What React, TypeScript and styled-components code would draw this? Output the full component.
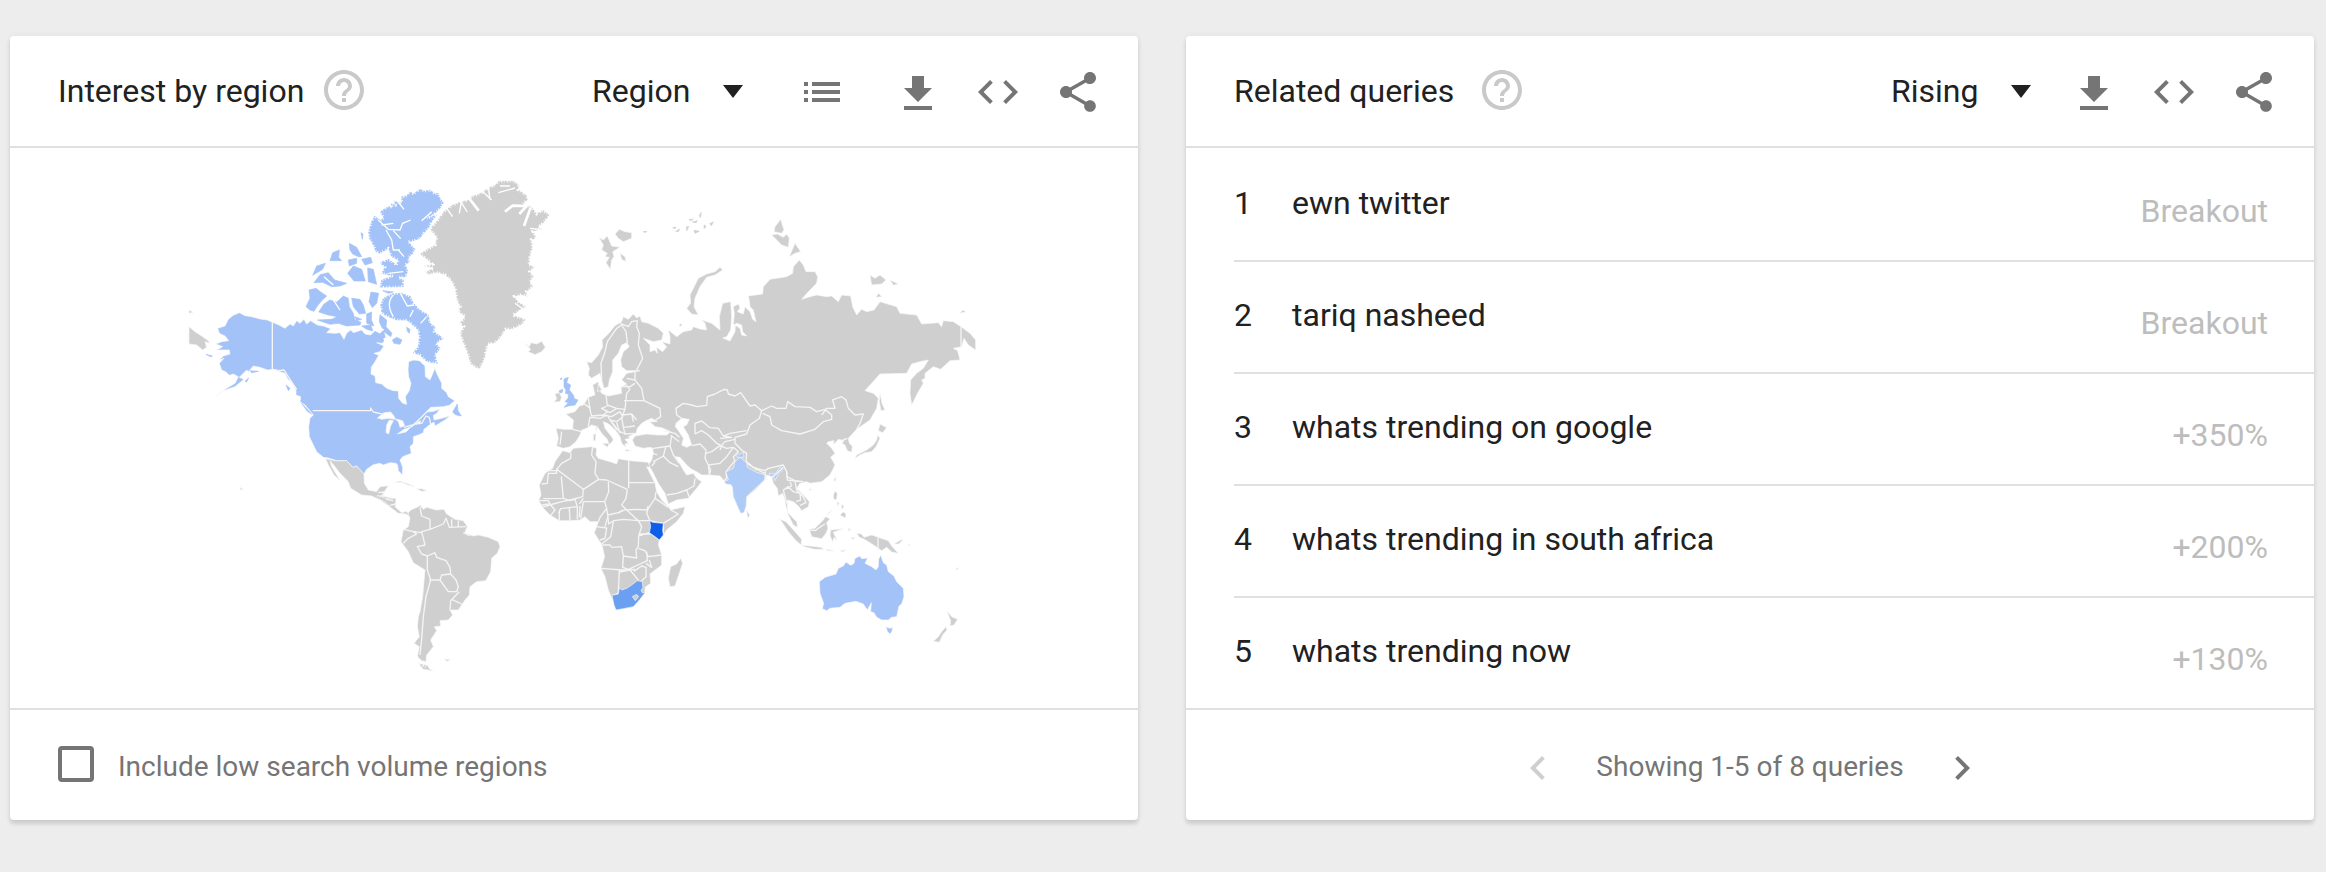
import React from "react";
import styled, { createGlobalStyle } from "styled-components";

const GlobalStyle = createGlobalStyle`
  *, *::before, *::after { box-sizing: border-box; }
  body {
    margin: 0;
    background: #ededed;
    color: #212121;
    font-family: Roboto, "Liberation Sans", sans-serif;
    font-size: 32px;
  }
`;

const Page = styled.main`
  display: grid;
  grid-template-columns: repeat(auto-fit, minmax(min(100%, 900px), 1fr));
  gap: 48px;
  padding: 36px 12px 52px 10px;
`;

const Card = styled.section`
  display: flex;
  flex-direction: column;
  min-width: 0;
  background: #fff;
  border-radius: 4px;
  box-shadow: 0 4px 4px rgba(0, 0, 0, 0.12), 0 0 6px rgba(0, 0, 0, 0.06);
`;

const CardHeader = styled.header`
  display: flex;
  align-items: center;
  min-height: 112px;
  padding: 0 36px 0 48px;
  border-bottom: 2px solid #e0e0e0;
`;

const Title = styled.h2`
  margin: 0;
  font-size: 32px;
  font-weight: 400;
  line-height: 40px;
`;

const IconButton = styled.button<{ $tone?: string }>`
  display: block;
  flex: none;
  width: 48px;
  height: 48px;
  padding: 0;
  border: 0;
  background: none;
  color: ${(p) => p.$tone ?? "#757575"};
  cursor: pointer;

  svg {
    display: block;
    width: 48px;
    height: 48px;
    fill: currentColor;
  }
`;

const HelpButton = styled(IconButton)<{ $gap: number }>`
  margin-left: ${(p) => p.$gap}px;
`;

const ListButton = styled(IconButton)`
  margin-right: 16px;
`;

const Toolbar = styled.div`
  display: flex;
  align-items: center;
  gap: 32px;
  margin-left: auto;
`;

const SelectBox = styled.span<{ $gap: number }>`
  position: relative;
  display: inline-flex;
  align-items: center;
  margin-right: ${(p) => p.$gap}px;

  svg {
    position: absolute;
    right: 0;
    width: 20px;
    height: 13px;
    fill: #212121;
    pointer-events: none;
  }
`;

const Select = styled.select`
  appearance: none;
  margin: 0;
  padding: 0 52px 0 0;
  border: 0;
  background: none;
  color: #212121;
  font: inherit;
  line-height: 40px;
`;

const CardFooter = styled.footer<{ $center?: boolean }>`
  display: flex;
  align-items: flex-start;
  justify-content: ${(p) => (p.$center ? "center" : "flex-start")};
  gap: 34px;
  min-height: 112px;
  padding: 34px 48px 28px;
  border-top: 2px solid #e0e0e0;
  color: #757575;
  font-size: 28px;
  line-height: 46px;
`;

const CheckLabel = styled.label`
  display: flex;
  align-items: flex-start;
  gap: 24px;
`;

const Checkbox = styled.input`
  appearance: none;
  width: 36px;
  height: 36px;
  margin: 2px 0 0;
  border: 4px solid #757575;
  border-radius: 4px;

  &:checked {
    background: #757575;
  }
`;

const QueryList = styled.ol`
  flex: 1;
  margin: 0;
  padding: 0 0 0 48px;
  list-style: none;
`;

const QueryRow = styled.li`
  display: grid;
  grid-template-columns: 58px 1fr auto;
  align-items: start;
  height: 112px;
  padding: 33px 46px 0 0;
  border-top: 2px solid #e0e0e0;
  line-height: 40px;

  &:first-child {
    border-top-color: transparent;
  }
`;

const QueryLink = styled.a`
  color: inherit;
  text-decoration: none;
`;

const QueryValue = styled.span`
  color: #bdbdbd;
  line-height: 56px;
`;

const MapArea = styled.div`
  flex: 1;
`;

const MapSvg = styled.svg`
  display: block;
  width: 100%;
  height: 560px;
`;

const Land = styled.path<{ $fill?: string; $edge?: string }>`
  fill: ${(p) => p.$fill ?? "#cfcfcf"};
  stroke: ${(p) => p.$edge ?? "#f8f8f8"};
  stroke-width: 2;
  stroke-linejoin: round;
`;

const Border = styled.path`
  fill: none;
  stroke: #f5f5f5;
  stroke-width: 4;
  stroke-linejoin: round;
`;

const Fjord = styled.path<{ $width?: number }>`
  fill: none;
  stroke: #fff;
  stroke-width: ${(p) => p.$width ?? 4};
`;

const Coast = styled.path<{ $width?: number }>`
  fill: none;
  stroke: #fff;
  stroke-width: ${(p) => p.$width ?? 11};
  stroke-dasharray: 3 5 2 8;
`;

const Water = styled.path`
  fill: #fff;
  stroke: #f5f5f5;
  stroke-width: 2;
`;

const BLUE = "#a3c2f7";
const INDIA = "#aecaf7";
const KENYA = "#0f5ee8";
const SOUTH_AFRICA = "#6a9ff2";

const ELLESMERE =
  "M600 125L612 118 625 110 638 112 632 100 650 108 640 93 665 100 665 80 680 78 690 65 700 72 720 58 735 64 750 60 765 72 775 70 778 82 790 98 780 115 765 130 740 145 770 135 755 155 745 175 730 190 720 205 700 212 685 215 705 238 695 255 685 262 688 275 675 285 683 300 678 320 655 322 670 330 670 350 600 352 605 330 640 318 605 310 615 292 600 278 625 268 650 285 655 270 635 260 625 235 600 250 588 245 580 225 568 205 566 185 573 160 583 138 600 150 612 145Z";
const BAFFIN =
  "M610 385L635 372 665 370 692 380 700 400 720 420 745 435 750 460 765 470 762 485 790 505 768 520 780 535 765 555 772 580 740 575 720 555 700 548 715 530 718 500 715 480 695 462 680 450 650 450 625 440 606 430 602 405Z";
const GREENLAND =
  "M118 282L140 268 165 255 170 232 155 215 150 205 165 190 190 155 215 135 240 125 262 120 275 108 300 100 315 90 330 80 345 75 355 62 400 62 418 75 415 88 440 105 445 118 430 132 455 140 470 160 490 150 510 165 490 190 475 200 485 208 460 215 470 235 455 240 458 265 450 290 448 315 465 320 450 335 462 350 450 365 460 380 440 395 442 410 425 405 405 410 415 425 440 440 425 450 400 465 438 478 430 490 415 500 395 508 378 508 360 535 345 550 325 552 318 575 315 595 308 610 300 628 285 622 270 610 262 580 248 545 240 520 250 500 238 490 255 470 235 455 240 440 230 420 225 385 212 360 195 345 170 338 145 345 135 335 160 325 130 318 155 312 140 298Z";

function WorldMap() {
  return (
    <MapSvg viewBox="10 148 1128 560" role="img" aria-label="World map of search interest by region">
      <g transform="translate(180 170) scale(.33333)">
        <Land
          $fill={BLUE}
          d="M178 428L195 437 215 440 240 447 262 450 277 457 297 465 315 475 330 462 340 468 350 452 360 460 372 448 380 462 392 452 412 465 430 468 452 476 440 488 465 490 480 488 492 508 500 490 512 480 520 488 545 480 555 492 572 495 585 482 600 490 612 478 618 505 608 520 590 518 612 528 600 545 582 550 596 556 585 575 574 592 573 612 585 618 587 638 605 642 620 655 640 662 655 663 656 685 668 700 680 703 676 680 688 662 693 640 686 620 684 600 686 575 700 570 718 572 735 588 736 620 750 630 765 595 770 610 785 640 785 655 800 668 805 680 824 692 808 706 790 710 755 712 740 726 760 724 780 718 768 732 760 736 762 750 785 745 810 738 795 750 765 768 762 756 748 765 732 778 730 788 715 795 700 800 700 820 690 830 694 850 668 860 660 870 668 892 667 915 655 902 653 885 648 880 630 878 610 885 600 880 580 884 560 898 552 912 545 905 530 888 518 892 500 872 470 872 445 864 430 862 410 845 400 825 388 800 386 770 390 745 400 735 392 725 375 705 360 695 362 680 348 675 348 660 335 635 325 630 315 610 300 605 280 598 262 600 240 592 220 588 205 605 200 600 178 622 192 628 165 650 130 662 107 678 140 655 165 640 175 620 160 612 148 616 138 606 125 600 118 580 132 565 118 570 130 558 150 552 148 540 110 540 128 530 108 522 125 515 146 512 135 498 118 490 113 475 135 468 145 448 160 436Z"
        />
        <Land
          $fill={BLUE}
          $edge={BLUE}
          d="M387 360L408 355 425 368 440 378 425 392 412 408 402 424 390 420 378 410 390 385ZM432 402L450 390 470 397 490 378 505 385 508 410 520 430 525 450 543 457 540 465 500 468 475 460 450 463 412 450 455 448 472 440 445 435 416 426ZM515 385L540 388 550 405 557 430 538 432 520 410ZM573 366L596 370 590 400 577 413 567 395ZM560 432L575 426 574 450 582 468 560 460ZM545 468L573 465 578 483 560 478ZM402 338L420 314 445 308 464 330 500 340 480 348 455 350 428 337ZM398 316L410 288 436 280 428 298ZM450 272L458 248 478 240 476 262 485 272ZM508 220L530 232 545 260 535 260 518 252 510 240ZM543 188L549 192 547 208ZM503 310L520 288 545 298 556 333 522 333ZM563 294L580 298 590 343 565 335ZM505 270L530 265 530 280 508 288ZM545 268L572 262 577 278 555 285ZM600 434L620 450 618 470 636 490 632 500 612 485 598 455ZM637 510L650 502 666 510 660 523 642 520ZM818 726L832 702 834 722 844 738 826 734ZM608 362L640 366 625 370ZM680 472L690 478 688 490 682 484ZM525 440L545 448 530 452Z"
        />
        <Land $fill={BLUE} $edge={BLUE} d="M78 553L97 558 92 560ZM195 634L206 624 200 636ZM210 602L235 604 215 608ZM318 645L330 655 325 662ZM365 700L395 732 382 724Z" />
        <Land $fill={BLUE} $edge={BLUE} d={ELLESMERE} />
        <Coast $width={8} d={ELLESMERE} />
        <Land $fill={BLUE} $edge={BLUE} d={BAFFIN} />
        <Coast $width={8} d={BAFFIN} />
        <Fjord d="M595 150L625 178 660 180 668 160 692 150M640 182L662 206M618 180L635 210 640 240 660 240M650 90L672 118M755 125L725 152M605 165L640 160M655 240L672 260M625 310L670 305M605 355H670" />
        <Fjord d="M640 375Q616 400 640 440M662 372L682 408 702 405M700 420L690 440M740 440L722 460M460 390L480 420M432 320L460 345M590 470L612 480" />
        <Fjord $width={7} d="M690 555L765 590M612 505L640 540" />
        <Water d="M592 744L612 728 632 726 642 738 645 748 625 745 606 748ZM628 750L640 752 632 768 626 792 618 788 620 764ZM645 746L668 752 674 768 660 772 655 755ZM652 792L672 778 694 770 678 786ZM702 762L722 752 720 760Z" />
        <Border d="M398 722H572V714L580 726 612 733M672 772L700 764 722 744 755 711M692 772L706 762 725 760 738 738 748 742 752 762M277 457V598L298 602 312 600 330 628 350 658" />
        <Land d="M437 866L470 873 500 872 518 892 530 888 552 912 553 940 565 960 590 965 600 950 625 947 615 962 605 978 640 985 648 990 645 1016 630 1010 600 990 575 978 545 975 512 955 505 935 480 910 465 890 450 872 455 890 470 915 480 932 462 915 445 885Z" />
        <Land d="M27 470L45 485 65 498 85 512 90 520 75 515 80 532 68 540 50 525 27 522ZM27 420L40 427 27 430Z" />
        <Land $fill={BLUE} d="M180 952L187 956 183 961Z" />
      </g>

      <g transform="translate(380 160) scale(.33333)">
        <Land d={GREENLAND} />
        <Coast d={GREENLAND} />
        <Fjord d="M195 138L218 170M245 120L238 160M242 125L262 156M300 88L335 120M325 82L330 118M355 98L405 84M360 78L390 78M450 205L480 208M405 430L440 455M400 470L425 448" />
        <Fjord $width={8} d="M262 108L296 152M375 155L398 137 440 138 418 162M452 142L432 198" />
        <Land d="M433 548L448 560 452 548 470 552 485 544 496 562 485 575 465 584 445 575 452 568Z" />
        <Land $fill={BLUE} $edge={BLUE} d="M552 657L565 652 560 668 572 675 568 690 580 705 583 716 594 720 585 735 565 738 552 742 565 728 555 725 564 715 566 703 556 700 558 690 552 680ZM538 692L549 688 546 698 538 698ZM541 656L546 653 543 660Z" />
        <Land d="M525 701L538 698 545 712 540 725 522 726 530 716Z" />
      </g>

      <g transform="translate(520 160) scale(.33333)">
        <Land d="M200 605L215 608 235 585 248 560 246 540 262 525 285 497 305 485 310 470 325 478 340 462 350 474 360 468 365 485 385 490 415 505 430 520 425 540 400 545 370 535 390 555 390 575 405 570 412 580 410 562 428 575 440 560 425 545 450 552 450 530 445 510 460 522 470 530 490 515 515 510 520 500 540 507 560 510 555 490 545 480 575 490 600 510 598 470 608 430 632 425 635 470 632 510 620 530 608 534 630 543 645 515 646 496 660 505 665 525 680 528 668 515 665 495 650 490 640 495 643 460 640 440 655 432 660 444 652 455 670 462 675 440 690 455 698 478 708 485 700 450 690 440 688 422 685 408 728 402 730 380 750 358 800 350 818 340 820 320 838 300 850 315 858 335 885 335 893 350 890 370 865 395 845 418 870 410 890 405 920 410 935 408 955 425 965 405 992 408 998 440 1010 465 1025 448 1040 455 1062 450 1080 425 1130 440 1140 460 1190 465 1205 492 1255 488 1265 500 1270 482 1300 485 1323 500 1350 520 1367 540 1367 570 1345 555 1332 535 1325 560 1300 565 1313 572 1320 600 1290 602 1262 628 1240 620 1215 640 1215 655 1205 660 1210 670 1195 695 1175 735 1170 700 1172 660 1190 640 1210 625 1225 600 1200 605 1175 612 1160 640 1080 642 1035 692 1060 700 1075 715 1070 745 1050 780 1010 808 985 835 988 850 997 858 995 877 982 872 975 855 966 850 972 842 955 838 940 855 942 842 925 845 920 850 935 865 945 880 932 892 940 905 945 915 930 945 905 965 870 970 860 965 840 970 830 985 855 1010 868 1025 865 1040 845 1052 835 1038 820 1025 802 1020 802 1055 815 1070 830 1085 833 1102 820 1095 805 1065 798 1040 795 1020 788 1000 775 1008 772 985 760 970 755 950 740 945 735 960 725 970 705 990 680 1010 678 1040 665 1060 655 1045 640 1010 637 980 632 970 620 972 610 960 600 948 570 945 545 945 530 935 515 928 500 915 480 892 466 890 480 912 490 930 500 945 520 940 530 955 545 965 530 985 505 1015 470 1020 445 1032 435 1000 415 970 395 930 385 915 395 900 400 880 398 865 390 862 370 865 345 858 337 840 345 828 380 822 410 825 440 825 452 815 425 803 405 800 390 785 412 785 395 775 378 782 365 790 352 805 348 820 335 825 325 830 330 835 315 838 325 850 315 852 318 862 305 850 300 830 290 815 270 795 262 790 250 785 255 805 275 830 280 840 268 855 262 838 245 820 232 800 215 795 200 805 185 810 180 825 168 845 150 860 130 865 110 858 115 835 108 805 130 808 158 808 160 780 138 762 165 755 178 738 190 735 205 712 225 705 218 675 235 665 240 690 245 700 265 708 305 700 303 682 320 672 305 660 320 640 345 635 360 632 320 632 305 620 302 600 310 575 328 560 320 548 305 555 295 580 278 600 278 635 268 660 265 680 252 685 245 660 240 640 215 655 205 645 208 625Z" />
        <Water d="M468 790L485 775 508 778 500 795 490 800 505 825 515 855 500 862 485 855 490 835 475 812 466 800Z" />
        <Land d="M600 322L608 330 585 345 560 352 540 380 525 415 522 440 535 465 515 462 500 445 512 430 510 405 525 375 535 355 560 342 585 335ZM237 232L250 240 262 228 275 258 300 262 278 275 282 290 275 300 271 328 258 308 268 292 255 290 262 280 245 270 250 255ZM285 222L298 208 315 215 335 218 335 235 310 245 295 235ZM300 280L315 290 318 305 305 298ZM765 200L782 178 792 210 785 220 762 215ZM755 225L772 222 790 232 800 222 808 235 805 262 785 255ZM825 250L842 275 825 280 808 290ZM1050 345L1065 355 1080 345 1098 360 1085 372 1055 375ZM1110 360L1135 372 1120 376ZM1075 400L1086 410 1068 412ZM1320 460L1328 450 1338 455ZM480 490L488 495 478 500ZM1080 700L1086 730 1095 750 1083 752 1078 725ZM1080 792L1100 803 1088 818 1075 812ZM1073 825L1080 835 1068 860 1055 875 1035 878 1020 885 1005 895 1010 885 1040 870 1060 855 1070 840ZM247 850L268 850 262 862ZM220 823L228 822 226 842 220 842ZM315 868L335 872 318 874ZM228 800L232 802 228 815ZM235 672L245 690 232 695Z" />
        <Land
          $edge="#cfcfcf"
          d="M458 203L468 201 465 206ZM467 215L478 207 476 214ZM500 200L506 200 500 212ZM517 186L532 182 528 188ZM522 211L538 214 525 220ZM538 166L544 157 541 173ZM553 194L558 200 552 206ZM569 191L580 186 574 197ZM507 179L520 177 512 182ZM370 215L380 214 375 218Z"
        />
        <Border d="M485 775L470 765 468 745 490 730 515 735 530 740 560 736 562 710 585 702 612 688 622 690 625 702 645 708 662 698 690 738 705 735 725 752 718 775 690 795 680 822 645 832 645 850 665 870 680 880 678 908 700 922 735 932 745 925 790 915 800 935 800 950 825 962 850 965M725 752L755 738 770 745 798 745 803 725 825 740 870 742 890 755 915 748 935 765 935 778 910 785 885 808 840 822 785 812 755 795 750 770 728 760M905 765L920 745 945 745 938 720 965 710 978 720 985 745 1005 765 1030 762 1020 790 1010 808M982 835L965 842" />
        <Border d="M525 822V790L545 783 570 803 595 805 610 828 630 820 680 812M525 822L545 812 565 825 590 850 605 857 615 845 645 838M610 828L635 832 600 835M515 857L540 852 558 870 555 895 565 915 568 945M558 880L575 875 600 857 620 865 640 862 620 890 600 910 565 915M565 915L572 930 568 945M640 862L655 875 640 890 645 902 618 935 620 955 612 962M605 857L600 870" />
        <Border d="M395 866L450 858 460 885 478 910M455 828L450 858M437 862L430 888 400 905M430 888L450 908 475 920M400 880L412 885M405 905L396 918M440 1005L470 1000 500 990 508 1012M500 990L522 978 525 955M430 812L465 820 478 832M452 826L478 845M735 935L738 960M700 922L738 942M680 905L710 930" />
        <Border d="M245 660L243 610 255 575 262 545 290 505 305 495 318 515 322 550M300 490L325 500 335 485 352 482 350 500 358 520 355 555 368 595 350 630M345 635L345 660 365 685 372 722 420 745 422 770 400 785M320 655L345 660M303 680L330 680 345 670M320 700L330 688 318 675M312 722L345 722 372 722M258 705L262 735 290 745 315 748 320 700M205 712L210 750 215 768 250 765 262 755 245 745 262 738M190 730L212 745M210 770L205 800M210 772L240 775 262 765M245 745L270 758 290 745M250 765L275 770 300 755 308 770 290 785 270 780 262 765M315 748L308 765 335 762 350 780M305 770L310 802 345 798M310 802L315 822 345 820M275 785L295 812 315 822M290 788L300 820M270 780L290 810M125 815L120 855M158 808L185 815M335 762L340 785M1323 500V562" />
        <Land $fill={INDIA} d="M660 892L680 908 682 922 710 937 735 945 733 960 720 972 700 990 680 1010 678 1040 672 1058 662 1060 655 1045 640 1010 637 980 632 974 618 972 612 965 625 960 618 936 640 925 645 905ZM648 880L658 884 670 876 672 892 652 892ZM748 940L765 942 780 922 790 928 775 942 772 948 765 962 762 950 748 948Z" />
      </g>

      <g transform="translate(700 300) scale(.33333)">
        <Border d="M250 570L265 560 280 575 300 580 302 600 288 605M285 545L290 570 310 590 318 608 300 616M270 545L275 558 250 570 258 600 262 612M215 532L225 525 250 502M260 515L262 540 300 545" />
        <Land d="M140 632L150 645 143 655ZM328 566L335 568 330 572ZM408 528L406 545 401 540ZM404 573L412 580 410 598 402 600 400 588ZM410 605L418 610 414 618ZM425 612L432 620 425 628ZM420 645L430 636 438 642 436 654ZM380 645L396 628 388 640ZM240 658L258 665 285 695 305 718 303 735 288 722 265 695 250 672ZM303 736L330 738 362 742 372 748 345 748 318 742ZM380 748L405 752 382 752ZM420 752L440 750 428 756ZM328 688L345 685 370 660 376 650 390 656 380 668 384 685 378 700 365 716 335 710ZM392 690L430 686 400 697 412 722 402 712 398 726 390 706ZM445 684L452 690 446 694ZM452 714L466 712 460 718ZM470 700L485 702 492 712 515 705 535 712 565 722 575 738 595 760 575 756 560 742 545 752 525 738 505 725 490 716 478 712ZM582 732L606 718 598 710 608 720 596 732ZM623 730L632 738 626 736ZM766 808L776 802 772 810ZM740 932L755 950 773 958 762 975 750 978 752 962ZM738 980L741 990 728 1005 718 1027 700 1024 715 1010 725 995Z" />
        <Border d="M534 712V750M330 690L345 692 362 680 375 672" />
        <Land $fill={BLUE} d="M358 845L375 832 408 822 415 805 430 798 438 786 452 796 462 790 465 775 480 768 485 776 503 774 495 790 515 800 528 810 535 800 536 778 542 765 550 788 560 795 565 815 582 828 590 845 610 865 612 890 605 912 597 918 590 950 575 952 565 960 545 960 530 952 522 938 512 935 514 908 502 930 490 912 468 904 435 910 420 922 390 925 380 932 367 926 371 910 360 880ZM558 980L570 985 578 982 576 994 570 1003 562 994Z" />
      </g>

      <g transform="translate(340 430) scale(.33333)">
        <Land d="M112 195L135 205 168 205 165 230 185 248 200 244 212 262 198 252 175 250 155 235 135 215 112 205ZM162 158L180 153 205 162 224 170 205 166 185 157ZM230 176L245 176 262 182 245 184ZM312 688L332 688 322 694ZM115 305L119 308Z" />
        <Border d="M115 188L132 186 130 200M138 208L160 212M150 226L166 222M118 200L128 196" />
        <Land d="M212 240L235 230 240 226 250 238 260 232 290 240 312 238 320 252 345 268 370 272 382 290 374 308 400 318 415 315 445 322 475 335 480 350 472 370 455 385 452 425 437 452 410 455 390 470 388 495 375 510 355 540 330 540 338 555 325 570 300 572 302 588 283 590 290 602 272 630 280 650 260 675 258 695 245 692 232 680 238 650 222 640 238 620 232 590 235 560 240 545 248 500 255 420 220 398 205 365 183 335 190 300 205 290 210 265 204 250ZM235 700L262 706 268 716 280 722 250 718Z" />
        <Border d="M240 232L245 258 270 268 270 298 245 305 255 345 232 350 245 372 262 378 262 420 272 450 258 500 250 560 245 625 240 675M190 298L218 304 230 312 205 325 190 340M218 304L245 308M270 298L310 282 318 265 328 292 378 290M335 268V290M355 272V290M262 378L285 368 290 382 318 392 330 412 332 432 305 435 300 450 268 450M332 432L348 450 355 470 350 485 325 485 300 450M358 485L332 512 330 540M335 508L365 522M370 308L390 318" />
        <Coast d="M228 590L222 640 232 695 262 712" />

        <Land d="M668 62L690 68 700 55 755 50 770 55 768 75 775 85 810 95 830 102 835 86 870 92 925 97 930 112 920 110 930 130 945 160 950 185 965 210 985 230 992 240 1035 230 1030 250 1010 275 980 300 970 315 958 330 955 345 965 375 965 405 930 432 932 460 915 472 915 490 880 530 828 540 820 515 805 480 795 440 783 415 794 380 786 345 770 320 763 308 770 290 775 275 750 275 735 260 720 270 690 272 658 272 630 255 610 235 596 212 603 195 598 165 615 130 638 115 645 95ZM1022 385L1028 400 1018 430 1005 468 990 470 985 445 992 410 1010 402Z" />
        <Border d="M693 68L692 85 665 100 650 118 730 178 728 200 690 210 665 215 640 222 605 232M650 118L650 130 625 130 622 160 605 162M620 122H650M664 140L670 205 610 206M758 50L755 75 768 95 765 130 776 148 730 178M776 148L800 150 862 178M866 92V175M866 158H942M862 178L858 205 845 225 860 240 890 238 920 240 925 228M805 152L806 185 794 215 800 235 780 262 775 275M730 215L795 215M730 215L722 265M800 235L803 255 835 248 858 238M803 255L806 282 822 272 850 268 895 272 930 272M860 240L895 272" />
        <Border d="M948 185L945 205 985 232M945 205L925 235 920 250 930 272 970 280 1015 252 992 240M970 280V312M820 276L812 320 785 342M788 345H810L816 352 845 350 850 378 890 384 888 360 895 350 896 318 905 290 895 272M898 312H930M896 318L928 308 958 330M896 356L915 362 925 380 965 375M850 378L848 412 865 418 900 402 922 392 920 365M783 415L848 420 885 418M838 420L835 490 818 496M838 426L870 420 895 450M882 424L905 408 918 412 918 440 905 452M918 400L935 412 928 390M770 290L800 294 795 325 780 330M803 262L795 290M848 240L835 250" />
        <Border d="M658 240V272M688 235L690 272M712 230V268M720 228L718 262M670 205L690 212 705 208 712 230 662 236 655 250M596 212H625L632 225 645 240 632 256M605 225L628 222M730 205L718 222" />
        <Land $fill={SOUTH_AFRICA} d="M816 496L835 492 838 474 846 480 862 474 875 465 892 452 907 455 909 475 903 480 907 488 915 488 900 508 880 530 850 536 828 540 822 525Z" />
        <Land d="M877 500L890 493 896 500 886 512Z" />
        <Land $fill={KENYA} d="M929 272L938 277 970 280 968 300 970 315 958 330 945 320 928 308 932 290Z" />
      </g>
    </MapSvg>
  );
}

const ICONS = {
  help: "M11 18h2v-2h-2v2zm1-16C6.48 2 2 6.48 2 12s4.48 10 10 10 10-4.48 10-10S17.52 2 12 2zm0 18c-4.41 0-8-3.59-8-8s3.59-8 8-8 8 3.59 8 8-3.59 8-8 8zm0-14c-2.21 0-4 1.79-4 4h2c0-1.1.9-2 2-2s2 .9 2 2c0 2-3 1.75-3 5h2c0-2.25 3-2.5 3-5 0-2.21-1.79-4-4-4z",
  list: "M3 13h2v-2H3v2zm0 4h2v-2H3v2zm0-8h2V7H3v2zm4 4h14v-2H7v2zm0 4h14v-2H7v2zM7 7v2h14V7H7z",
  download: "M19 10h-4V4H9v6H5l7 7 7-7zM5 19v2h14v-2H5z",
  code: "M9.4 16.6L4.8 12l4.6-4.6L8 6l-6 6 6 6 1.4-1.4zm5.2 0l4.6-4.6-4.6-4.6L16 6l6 6-6 6-1.4-1.4z",
  share:
    "M18 16.08c-.76 0-1.44.3-1.96.77L8.91 12.7c.05-.23.09-.46.09-.7s-.04-.47-.09-.7l7.05-4.11c.54.5 1.25.81 2.04.81 1.66 0 3-1.34 3-3s-1.34-3-3-3-3 1.34-3 3c0 .24.04.47.09.7L8.04 9.81C7.5 9.31 6.79 9 6 9c-1.66 0-3 1.34-3 3s1.34 3 3 3c.79 0 1.5-.31 2.04-.81l7.12 4.16c-.05.21-.08.43-.08.65 0 1.61 1.31 2.92 2.92 2.92s2.92-1.31 2.92-2.92-1.31-2.92-2.92-2.92z",
  left: "M15.41 7.41L14 6l-6 6 6 6 1.41-1.41L10.83 12z",
  right: "M10 6L8.59 7.41 13.17 12l-4.58 4.59L10 18l6-6z",
};

function Icon({ name, viewBox = "0 0 24 24" }: { name: keyof typeof ICONS; viewBox?: string }) {
  return (
    <svg viewBox={viewBox} aria-hidden="true">
      <path d={ICONS[name]} />
    </svg>
  );
}

function Help({ about, gap }: { about: string; gap: number }) {
  return (
    <HelpButton type="button" $gap={gap} $tone="#c9c9c9" aria-label={`Help: ${about}`}>
      <Icon name="help" viewBox="0 0.5 24 24" />
    </HelpButton>
  );
}

function Dropdown({ label, options, gap }: { label: string; options: string[]; gap: number }) {
  return (
    <SelectBox $gap={gap}>
      <Select aria-label={label} defaultValue={options[0]}>
        {options.map((o) => (
          <option key={o}>{o}</option>
        ))}
      </Select>
      <svg viewBox="0 0 20 13" aria-hidden="true">
        <path d="M0 0H20L10 13Z" />
      </svg>
    </SelectBox>
  );
}

function ShareTools() {
  return (
    <>
      {(["download", "code", "share"] as const).map((name) => (
        <IconButton key={name} type="button" aria-label={name}>
          <Icon name={name} viewBox="0 -0.5 24 24" />
        </IconButton>
      ))}
    </>
  );
}

const QUERIES = [
  { text: "ewn twitter", value: "Breakout" },
  { text: "tariq nasheed", value: "Breakout" },
  { text: "whats trending on google", value: "+350%" },
  { text: "whats trending in south africa", value: "+200%" },
  { text: "whats trending now", value: "+130%" },
];

export default function App() {
  return (
    <>
      <GlobalStyle />
      <Page>
        <Card>
          <CardHeader>
            <Title>Interest by region</Title>
            <Help about="Interest by region" gap={16} />
            <Toolbar>
              <Dropdown label="Resolution" options={["Region", "City"]} gap={23} />
              <ListButton type="button" aria-label="list">
                <Icon name="list" viewBox="0 -0.5 24 24" />
              </ListButton>
              <ShareTools />
            </Toolbar>
          </CardHeader>
          <MapArea>
            <WorldMap />
          </MapArea>
          <CardFooter>
            <CheckLabel>
              <Checkbox type="checkbox" />
              Include low search volume regions
            </CheckLabel>
          </CardFooter>
        </Card>

        <Card>
          <CardHeader>
            <Title>Related queries</Title>
            <Help about="Related queries" gap={24} />
            <Toolbar>
              <Dropdown label="Sort queries" options={["Rising", "Top"]} gap={7} />
              <ShareTools />
            </Toolbar>
          </CardHeader>
          <QueryList>
            {QUERIES.map((q, i) => (
              <QueryRow key={q.text}>
                <span>{i + 1}</span>
                <QueryLink href="#">{q.text}</QueryLink>
                <QueryValue>{q.value}</QueryValue>
              </QueryRow>
            ))}
          </QueryList>
          <CardFooter $center>
            <IconButton type="button" aria-label="Previous" $tone="#cfcfcf" disabled>
              <Icon name="left" />
            </IconButton>
            <span>Showing 1-5 of 8 queries</span>
            <IconButton type="button" aria-label="Next">
              <Icon name="right" />
            </IconButton>
          </CardFooter>
        </Card>
      </Page>
    </>
  );
}
